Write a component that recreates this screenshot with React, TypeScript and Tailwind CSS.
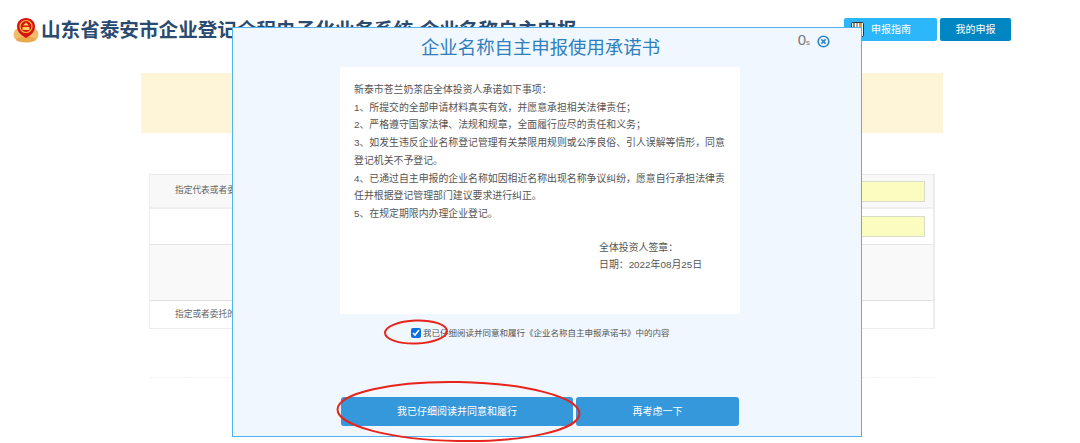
const FONT = "[font-family:'Liberation_Sans','Noto_Sans_CJK_SC',sans-serif]";

const promises = [
  { text: "新泰市苍兰奶茶店全体投资人承诺如下事项：" },
  { text: "1、所提交的全部申请材料真实有效，并愿意承担相关法律责任；" },
  { text: "2、严格遵守国家法律、法规和规章，全面履行应尽的责任和义务；" },
  { text: "3、如发生违反企业名称登记管理有关禁限用规则或公序良俗、引人误解等情形，同意登记机关不予登记。" },
  { text: "4、已通过自主申报的企业名称如因相近名称出现名称争议纠纷，愿意自行承担法律责任并根据登记管理部门建议要求进行纠正。" },
  { text: "5、在规定期限内办理企业登记。" },
];

function Emblem() {
  return (
    <svg width="26" height="26" viewBox="0 0 26 26" className="shrink-0">
      <ellipse cx="5.5" cy="17.5" rx="5" ry="6" fill="#f0bd6c" />
      <ellipse cx="20.5" cy="17.5" rx="5" ry="6" fill="#f0bd6c" />
      <ellipse cx="13" cy="22.5" rx="10" ry="3" fill="#eaa94e" />
      <path d="M4 9.5C4 4.5 8 1 13 1s9 3.5 9 8.5c0 5-4 9-9 11.5C8 18.500 4 14.500 4 9.500z" fill="#d8140f" />
      <circle cx="13" cy="9.500" r="6" fill="none" stroke="#f2b93a" strokeWidth="1.200" />
      <rect x="9.500" y="10" width="7" height="3" fill="#f6d060" />
      <path d="M10 8.500h6l-3-3z" fill="#f6d060" />
    </svg>
  );
}

function GuideIcon() {
  return (
    <svg width="13" height="15" viewBox="0 0 13 15" className="shrink-0">
      <rect x="0.5" y="0.5" width="12" height="14" rx="1" fill="#fff" stroke="#333" />
      <rect x="2" y="1" width="2" height="5" fill="#888" />
      <rect x="5" y="1" width="2" height="5" fill="#aaa" />
      <rect x="8" y="1" width="3" height="5" fill="#e0a030" />
    </svg>
  );
}

function Background() {
  return (
    <div className="flex flex-col">
      <div className="flex items-start h-[73px] pt-[17px]">
        <div className="flex items-center pl-[13px] w-[844px] gap-[2px]">
          <Emblem />
          <span className="text-[19.6px] leading-[26px] font-bold text-[#2b4a6f] whitespace-nowrap">
            山东省泰安市企业登记全程电子化业务系统-企业名称自主申报
          </span>
        </div>
        <div className="flex gap-[3px] pt-[1px] text-[10px] text-white">
          <button className="w-[93px] h-[23px] bg-[#2db7fb] rounded-[2px] flex items-center gap-[7px] pl-[7px]">
            <GuideIcon />
            申报指南
          </button>
          <button className="w-[71px] h-[23px] bg-[#0087c3] rounded-[2px]">我的申报</button>
        </div>
      </div>

      <div className="ml-[141px] w-[802px] h-[60px] bg-[#fef5d9]" />

      <div className="ml-[149px] w-[786px] mt-[41px] border border-[#ececec] border-r-2 text-[8.7px] text-[#666]">
        <div className="h-[34px] bg-[#f8f8f8] border-b-2 border-[#efefef] flex items-center pl-[25px] pr-[8px] justify-between">
          <span>指定代表或者委托代理人</span>
          <div className="w-[300px] h-[21px] bg-[#fbfdc0] border border-[#d9dcc8]" />
        </div>
        <div className="h-[36px] border-b border-[#e5e5e5] flex items-center justify-end pr-[8px]">
          <div className="w-[300px] h-[21px] bg-[#fbfdc0] border border-[#d9dcc8]" />
        </div>
        <div className="h-[56px] bg-[#f9f9f9] border-b border-[#e0e0e0]" />
        <div className="h-[27px] flex items-center pl-[25px]">指定或者委托的有效期限</div>
      </div>

      <div className="ml-[149px] w-[786px] mt-[48px] border-t border-dashed border-[#f2f2f2]" />
    </div>
  );
}

function Modal() {
  return (
    <div className="absolute left-[232px] top-[27px] w-[630px] h-[410px] bg-[#f0f7ff] border border-[#4db3f5] flex flex-col">
      <div className="relative h-[39px] flex items-center justify-center pr-[13px] text-[18.4px] text-[#2f7fbd]">
        企业名称自主申报使用承诺书
        <div className="absolute right-[31px] top-[3px] flex items-center gap-[7px]">
          <span className="text-[15px] leading-[18px] text-[#777]">
            0<span className="text-[8px]">s</span>
          </span>
          <svg width="13" height="13" viewBox="0 0 13 13" fill="none" stroke="#2f86c8" strokeWidth="1.6" className="-mt-[1px]">
            <circle cx="6.5" cy="6.5" r="5.3" />
            <path d="M4.4 4.4l4.2 4.2M8.6 4.4l-4.2 4.2" />
          </svg>
        </div>
      </div>

      <div className="ml-[107px] w-[400px] h-[247px] bg-white px-[14px] pt-[14px] text-[9.9px] leading-[17.7px] text-[#555]">
        {promises.map((p) => (
          <p key={p.text}>{p.text}</p>
        ))}
        <div className="pl-[245px] mt-[16px]">全体投资人签章：</div>
        <div className="pl-[245px]">日期：2022年08月25日</div>
      </div>

      <label className="mt-[13px] h-[12px] pl-[178px] flex items-center gap-[2px] text-[8.5px] text-[#555] whitespace-nowrap">
        <input type="checkbox" defaultChecked className="w-[10px] h-[10px] m-0 accent-[#0a6fe0]" />
        我已仔细阅读并同意和履行《企业名称自主申报承诺书》中的内容
      </label>

      <div className="mt-[58px] pl-[108px] flex gap-[3px] text-[10px] text-white">
        <button className="w-[232px] h-[29px] bg-[#3498db] rounded-[3px]">我已仔细阅读并同意和履行</button>
        <button className="w-[163px] h-[29px] bg-[#3498db] rounded-[3px]">再考虑一下</button>
      </div>
    </div>
  );
}

export default function App() {
  return (
    <div className={`relative w-[1080px] h-[443px] overflow-hidden bg-white ${FONT}`}>
      <Background />
      <Modal />
      {/* hand-drawn red annotations on the screenshot */}
      <svg width="1080" height="443" className="absolute left-0 top-0 pointer-events-none" fill="none" stroke="#e8231a" strokeWidth="2">
        <ellipse cx="416" cy="332" rx="31" ry="11.5" transform="rotate(-2 416 332)" />
        <ellipse cx="458.5" cy="411.5" rx="121" ry="29.5" transform="rotate(1 458 411)" />
      </svg>
    </div>
  );
}
